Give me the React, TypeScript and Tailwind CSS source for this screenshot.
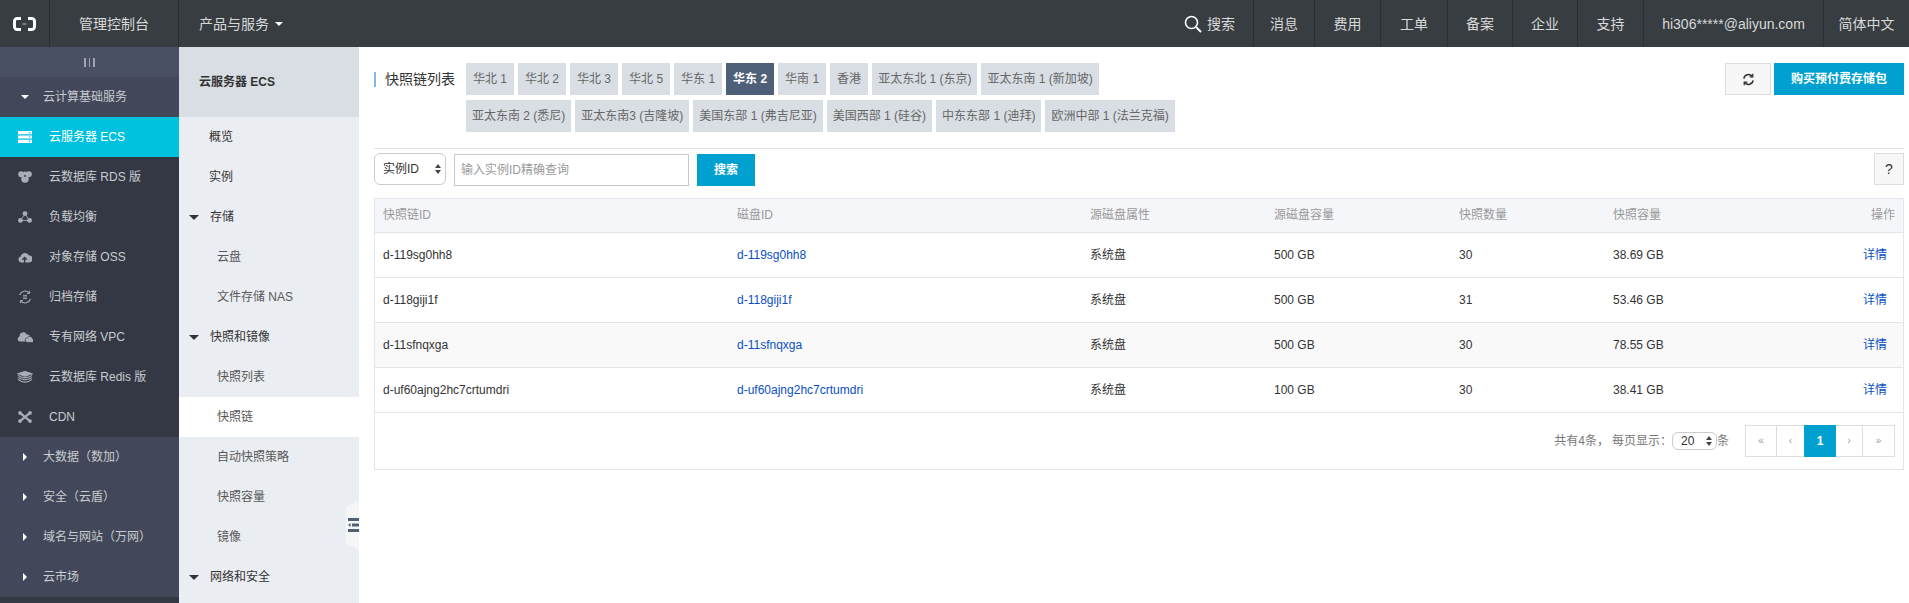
import React from 'react';

const font = "font-['Liberation_Sans','Noto_Sans_CJK_SC',sans-serif]";

const IconServer = () => (
  <svg viewBox="0 0 14 12" className="w-[14px] h-[12px]" fill="currentColor">
    <path d="M0 0h14v3.2H0zM0 4.4h14v3.2H0zM0 8.8h14V12H0z" />
    <path d="M11 1h1.4v1.2H11zM11 5.4h1.4v1.2H11zM11 9.8h1.4V11H11z" fill="#00c1de" />
  </svg>
);
const IconDb = () => (
  <svg viewBox="0 0 14 12" className="w-[14px] h-[12px]" fill="currentColor">
    <circle cx="3.2" cy="3.2" r="3" />
    <circle cx="10.8" cy="3.2" r="3" />
    <circle cx="7" cy="8" r="3.8" />
    <circle cx="7" cy="2.8" r="2.4" />
    <circle cx="7" cy="5" r="0.9" fill="#333844" />
  </svg>
);
const IconBalance = () => (
  <svg viewBox="0 0 14 12" className="w-[14px] h-[12px]" fill="currentColor" stroke="currentColor">
    <circle cx="7" cy="2.6" r="2.4" stroke="none" />
    <circle cx="2.4" cy="9.4" r="2.4" stroke="none" />
    <circle cx="11.6" cy="9.4" r="2.4" stroke="none" />
    <path d="M7 3L2.4 9.4h9.2z" fill="none" strokeWidth="0.9" />
  </svg>
);
const IconOss = () => (
  <svg viewBox="0 0 14 12" className="w-[14px] h-[12px]">
    <path d="M3.2 11.4A3 3 0 0 1 2.7 5.5 4.4 4.4 0 0 1 11 4.4 3.4 3.4 0 0 1 11 11.4z" fill="currentColor" />
    <path d="M6.6 12V7M4.4 8.8l2.2-2.2 2.2 2.2" fill="none" stroke="#333844" strokeWidth="1.4" />
  </svg>
);
const IconArchive = () => (
  <svg viewBox="0 0 14 14" className="w-[14px] h-[14px]" fill="none" stroke="currentColor">
    <path d="M1.6 5A5.8 5.8 0 0 1 11.2 2.8M12.4 9a5.8 5.8 0 0 1-9.6 2.2" strokeWidth="1.1" />
    <path d="M11.6.8v2.6H9M2.4 13.2v-2.6H5" strokeWidth="1" />
    <path d="M5 5.4h4M5 7h4M5 8.6h4" strokeWidth="0.9" />
  </svg>
);
const IconVpc = () => (
  <svg viewBox="0 0 16 12" className="w-4 h-3" fill="currentColor">
    <path d="M3 10.6A2.6 2.6 0 0 1 2.6 5.5 3.8 3.8 0 0 1 9.8 3.4 2.8 2.8 0 0 1 10 10.6z" />
    <path d="M10.6 11.4a2.3 2.3 0 0 1-.2-4.6A2.8 2.8 0 0 1 15.6 7.8 1.9 1.9 0 0 1 14.2 11.4z" stroke="#333844" strokeWidth="0.7" />
  </svg>
);
const IconRedis = () => (
  <svg viewBox="0 0 16 12" className="w-4 h-3" fill="none" stroke="currentColor" strokeWidth="1.1">
    <path d="M8 .4l7 2.4-7 2.4-7-2.4z" fill="currentColor" />
    <path d="M1 4.4c1 .9 3.6 2.2 7 2.2s6-1.3 7-2.2M1 6.4c1 .9 3.6 2.2 7 2.2s6-1.3 7-2.2M1 8.4c1 .9 3.6 2.7 7 2.7s6-1.8 7-2.7" />
  </svg>
);
const IconCdn = () => (
  <svg viewBox="0 0 14 12" className="w-[14px] h-[12px]" fill="currentColor" stroke="currentColor">
    <path d="M2 1.8l10 8.4M12 1.8L2 10.2" strokeWidth="2.2" fill="none" />
    <circle cx="2" cy="1.9" r="1.9" stroke="none" />
    <circle cx="12" cy="1.9" r="1.9" stroke="none" />
    <circle cx="2" cy="10.1" r="1.9" stroke="none" />
    <circle cx="12" cy="10.1" r="1.9" stroke="none" />
  </svg>
);

const products = [
  { label: '云服务器 ECS', icon: <IconServer />, active: true },
  { label: '云数据库 RDS 版', icon: <IconDb /> },
  { label: '负载均衡', icon: <IconBalance /> },
  { label: '对象存储 OSS', icon: <IconOss /> },
  { label: '归档存储', icon: <IconArchive /> },
  { label: '专有网络 VPC', icon: <IconVpc /> },
  { label: '云数据库 Redis 版', icon: <IconRedis /> },
  { label: 'CDN', icon: <IconCdn /> },
];

const groups = ['大数据（数加）', '安全（云盾）', '域名与网站（万网）', '云市场'];

const subNav = [
  { label: '概览', kind: 'top' },
  { label: '实例', kind: 'top' },
  { label: '存储', kind: 'group' },
  { label: '云盘', kind: 'sub' },
  { label: '文件存储 NAS', kind: 'sub' },
  { label: '快照和镜像', kind: 'group' },
  { label: '快照列表', kind: 'sub' },
  { label: '快照链', kind: 'sub', active: true },
  { label: '自动快照策略', kind: 'sub' },
  { label: '快照容量', kind: 'sub' },
  { label: '镜像', kind: 'sub' },
  { label: '网络和安全', kind: 'group' },
];

const topItems = [
  { label: '消息', w: 'w-[61px]' },
  { label: '费用', w: 'w-[66px]' },
  { label: '工单', w: 'w-[67px]' },
  { label: '备案', w: 'w-[65px]' },
  { label: '企业', w: 'w-[65px]' },
  { label: '支持', w: 'w-[66px]' },
  { label: 'hi306*****@aliyun.com', w: 'w-[180px]' },
];

const regionsA = ['华北 1', '华北 2', '华北 3', '华北 5', '华东 1', '华东 2', '华南 1', '香港', '亚太东北 1 (东京)', '亚太东南 1 (新加坡)'];
const regionsB = ['亚太东南 2 (悉尼)', '亚太东南3 (吉隆坡)', '美国东部 1 (弗吉尼亚)', '美国西部 1 (硅谷)', '中东东部 1 (迪拜)', '欧洲中部 1 (法兰克福)'];

const rows = [
  { id: 'd-119sg0hh8', size: '500 GB', count: '30', used: '38.69 GB' },
  { id: 'd-118giji1f', size: '500 GB', count: '31', used: '53.46 GB' },
  { id: 'd-11sfnqxga', size: '500 GB', count: '30', used: '78.55 GB' },
  { id: 'd-uf60ajng2hc7crtumdri', size: '100 GB', count: '30', used: '38.41 GB' },
];

const Caret = ({ className = '' }: { className?: string }) => (
  <span className={`inline-block w-0 h-0 border-x-[4px] border-x-transparent border-t-[4px] ${className}`} />
);

const SelectArrows = () => (
  <span className="flex flex-col gap-[2px]">
    <span className="w-0 h-0 border-x-[3px] border-x-transparent border-b-[4px] border-b-[#444]" />
    <span className="w-0 h-0 border-x-[3px] border-x-transparent border-t-[4px] border-t-[#444]" />
  </span>
);

const Region = ({ label }: { label: string }) => (
  <span
    className={`h-8 flex items-center whitespace-nowrap text-xs ${label.includes('(') ? 'px-[6px]' : 'px-[7px]'} ${
      label === '华东 2' ? 'bg-[#4e6078] text-white font-bold' : 'bg-[#d9dee4] text-[#666]'
    }`}
  >
    {label}
  </span>
);

export default function App() {
  return (
    <div className={`${font} w-full h-[603px] overflow-hidden flex flex-col bg-white text-xs text-[#333]`}>
      <header className="h-[47px] shrink-0 bg-[#373d41] flex text-[#d9d9d9] text-sm">
        <div className="w-[50px] border-r border-[#2a2f32] flex items-center justify-center">
          <svg viewBox="0 0 23 14" className="w-[23px] h-[14px]" fill="none" stroke="#fff" strokeWidth="3">
            <path d="M8 1.5H4.2A2.7 2.7 0 0 0 1.5 4.2v5.6a2.7 2.7 0 0 0 2.7 2.7H8M15 1.5h3.8a2.7 2.7 0 0 1 2.7 2.7v5.6a2.7 2.7 0 0 1-2.7 2.7H15" />
            <path d="M9.5 7h4" strokeWidth="0.9" stroke="#c8c8c8" />
          </svg>
        </div>
        <div className="w-[129px] border-r border-[#2a2f32] flex items-center justify-center">管理控制台</div>
        <div className="flex items-center pl-5 gap-[6px]">
          产品与服务
          <Caret className="border-t-white" />
        </div>
        <div className="ml-auto flex">
          <div className="flex items-center gap-[5px] pr-[18px] border-r border-[#2a2f32]">
            <svg viewBox="0 0 18 18" className="w-[18px] h-[18px]" fill="none" stroke="#fff" strokeWidth="1.6">
              <circle cx="7.5" cy="7.5" r="6" />
              <path d="M12 12l5 5" strokeWidth="2" />
            </svg>
            搜索
          </div>
          {topItems.map((t) => (
            <div key={t.label} className={`${t.w} border-r border-[#2a2f32] flex items-center justify-center`}>
              {t.label}
            </div>
          ))}
          <div className="w-[85px] flex items-center justify-center">简体中文</div>
        </div>
      </header>

      <div className="flex-1 flex min-h-0">
        <aside className="w-[179px] shrink-0 bg-[#333844] text-[#c8cbd0]">
          <div className="h-[30px] bg-[#4a5064] flex items-center justify-center gap-[3px]">
            <span className="w-[1.5px] h-[9px] bg-[#a0a4ae]" />
            <span className="w-[1.5px] h-[9px] bg-[#a0a4ae]" />
            <span className="w-[1.5px] h-[9px] bg-[#a0a4ae]" />
          </div>
          <div className="h-10 bg-[#424859] flex items-center pl-[21px] gap-[14px]">
            <Caret className="border-t-white" />
            云计算基础服务
          </div>
          {products.map((p) => (
            <div
              key={p.label}
              className={`h-10 flex items-center ${p.active ? 'bg-[#00c1de] text-white' : ''}`}
            >
              <span className={`w-[49px] flex justify-center ${p.active ? 'text-white' : 'text-[#a8adb5]'}`}>
                {p.icon}
              </span>
              {p.label}
            </div>
          ))}
          <div className="bg-[#424859]">
            {groups.map((g) => (
              <div key={g} className="h-10 flex items-center pl-[23px] gap-4">
                <span className="w-0 h-0 border-y-[4px] border-y-transparent border-l-[4px] border-l-white" />
                {g}
              </div>
            ))}
          </div>
        </aside>

        <aside className="w-[180px] shrink-0 bg-[#eaedf1] text-[#595959] relative">
          <div className="h-[70px] bg-[#d9dee4] flex items-center pl-5 font-bold text-[#333]">云服务器 ECS</div>
          {subNav.map((n) => (
            <div
              key={n.label}
              className={`h-10 flex items-center ${n.active ? 'bg-white' : ''} ${
                n.kind === 'sub' ? 'pl-[38px]' : n.kind === 'top' ? 'pl-[30px]' : 'pl-[10px] gap-[11px] text-[#333]'
              } ${n.kind === 'top' ? 'text-[#333]' : ''}`}
            >
              {n.kind === 'group' && <Caret className="border-t-[#333] border-x-[5px] border-t-[5px]" />}
              {n.label}
            </div>
          ))}
          <div className="absolute right-0 top-[453px] w-[13px] h-[50px] bg-[#f5f6f7] [clip-path:polygon(100%_0,100%_100%,0_86%,0_14%)] flex items-center justify-end">
            <svg viewBox="0 0 11 14" className="w-[11px] h-[14px]" fill="#4f6075">
              <path d="M0 0h11v3H0zM4 5.5h7v3H4zM0 11h11v3H0zM0 7l2.6-2v4z" />
            </svg>
          </div>
        </aside>

        <main className="flex-1 min-w-0 pl-[15px] pr-[5px]">
          <div className="flex justify-between pt-4 border-b border-[#e1e1e1] h-[102px]">
            <div className="flex">
              <div className="w-[92px] h-8 flex items-center">
                <span className="w-[2px] h-[15px] bg-[#88b7e0] mr-[9px]" />
                <span className="text-sm text-[#333]">快照链列表</span>
              </div>
              <div className="flex flex-col gap-[5px]">
                <div className="flex gap-1">
                  {regionsA.map((r) => (
                    <Region key={r} label={r} />
                  ))}
                </div>
                <div className="flex gap-1">
                  {regionsB.map((r) => (
                    <Region key={r} label={r} />
                  ))}
                </div>
              </div>
            </div>
            <div className="flex gap-[3px] h-8">
              <button className="w-[46px] h-8 bg-[#f7f7f7] border border-[#dddddd] flex items-center justify-center">
                <svg viewBox="0 0 14 14" className="w-[13px] h-[13px]" fill="none" stroke="#333" strokeWidth="1.6">
                  <path d="M2 6a5 5 0 0 1 9-2.2M12 8a5 5 0 0 1-9 2.2" />
                  <path d="M11.6 .8v3.4H8.2M2.4 13.2V9.8h3.4" strokeWidth="1.4" />
                </svg>
              </button>
              <button className="w-[130px] h-8 bg-[#00a0d0] text-white font-bold">购买预付费存储包</button>
            </div>
          </div>

          <div className="flex items-start mt-1 mb-3">
            <div className="w-[72px] h-8 border border-[#ccc] rounded-[6px] flex items-center justify-between pl-2 pr-1">
              实例ID
              <SelectArrows />
            </div>
            <div className="ml-2 w-[235px] h-8 mt-[1px] border border-[#c8c8c8] flex items-center px-[6px] text-[#9a9a9a]">
              输入实例ID精确查询
            </div>
            <button className="ml-2 w-[58px] h-8 mt-[1px] bg-[#00a0d0] text-white font-bold">搜索</button>
            <button className="ml-auto w-[30px] h-8 bg-[#f7f7f7] border border-[#dddddd] text-sm">?</button>
          </div>

          <div className="border border-[#e1e6eb]">
            <table className="w-full table-fixed border-collapse">
              <colgroup>
                <col className="w-[354px]" />
                <col className="w-[353px]" />
                <col className="w-[184px]" />
                <col className="w-[185px]" />
                <col className="w-[154px]" />
                <col className="w-[150px]" />
                <col />
              </colgroup>
              <thead>
                <tr className="h-[33px] bg-[#f5f6fa] text-[#999] border-b border-[#e1e6eb]">
                  <th className="font-normal text-left pl-2">快照链ID</th>
                  <th className="font-normal text-left pl-2">磁盘ID</th>
                  <th className="font-normal text-left pl-2">源磁盘属性</th>
                  <th className="font-normal text-left pl-2">源磁盘容量</th>
                  <th className="font-normal text-left pl-2">快照数量</th>
                  <th className="font-normal text-left pl-2">快照容量</th>
                  <th className="font-normal text-right pr-2">操作</th>
                </tr>
              </thead>
              <tbody>
                {rows.map((r, i) => (
                  <tr key={r.id} className={`h-[45px] border-b border-[#e1e6eb] ${i === 2 ? 'bg-[#f9f9fa]' : ''}`}>
                    <td className="pl-2">{r.id}</td>
                    <td className="pl-2 text-[#0a4fc4]">{r.id}</td>
                    <td className="pl-2">系统盘</td>
                    <td className="pl-2">{r.size}</td>
                    <td className="pl-2">{r.count}</td>
                    <td className="pl-2">{r.used}</td>
                    <td className="text-right pr-4 text-[#0a4fc4]">详情</td>
                  </tr>
                ))}
              </tbody>
            </table>
            <div className="h-[56px] flex items-center justify-end pr-2 text-[#777]">
              共有4条，
              <span className="ml-[3px]">每页显示：</span>
              <span className="w-[45px] h-[18px] border border-[#ccc] rounded-[6px] flex items-center justify-between pl-2 pr-1 text-[#333]">
                20
                <SelectArrows />
              </span>
              条
              <div className="ml-4 flex h-8 border border-[#ddd] text-[#999]">
                <span className="w-[31px] flex items-center justify-center border-r border-[#ddd] text-[10px]">«</span>
                <span className="w-[27px] flex items-center justify-center text-[10px]">‹</span>
                <span className="w-[32px] -my-px flex items-center justify-center bg-[#00a0d0] text-white font-bold">1</span>
                <span className="w-[27px] flex items-center justify-center border-r border-[#ddd] text-[10px]">›</span>
                <span className="w-[31px] flex items-center justify-center text-[10px]">»</span>
              </div>
            </div>
          </div>
        </main>
      </div>
    </div>
  );
}
